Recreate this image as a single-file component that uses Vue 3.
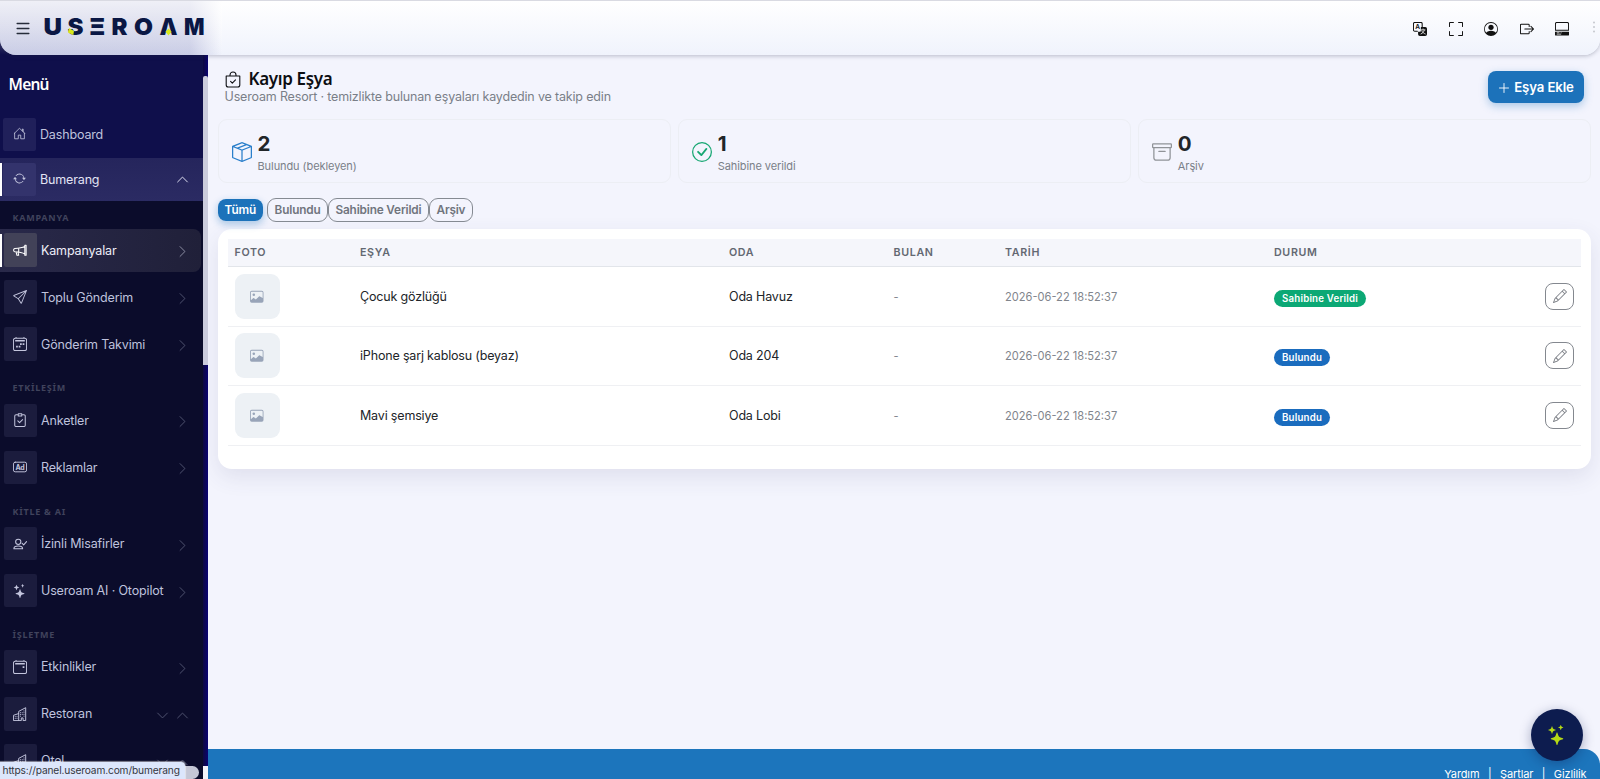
<template>
  <div class="page">
    <header class="topbar">
      <button class="menu-btn"><svg class="icon" viewBox="0 0 16 16" v-html="icons.list"></svg></button>
      <svg class="logo" viewBox="0 0 166 24">
        <text v-for="l in logo" :key="l.x" :x="l.x" y="20" :textLength="l.w" lengthAdjust="spacingAndGlyphs">{{ l.c }}</text>
        <path class="logo-dot" d="M25 13l5 3-.7 4-5.300-2.500zM124.500 13.500l3 3.300-3 3.600-3-3.600z" />
      </svg>
      <nav class="tools">
        <svg v-for="t in tools" :key="t" class="icon" viewBox="0 0 16 16" v-html="icons[t]"></svg>
      </nav>
      <svg class="dots" viewBox="0 0 4 14"><circle v-for="n in 3" :key="n" cx="2" :cy="n * 4.5 - 2" r="1" /></svg>
    </header>

    <aside class="sidebar">
      <div class="side-scroll">
        <h4>Menü</h4>
        <a class="side-item top-item">
          <span class="ibox"><svg class="icon" viewBox="0 0 16 16" v-html="icons.house"></svg></span>
          <span>Dashboard</span>
        </a>
        <a class="side-item top-item open">
          <span class="ibox"><svg class="icon" viewBox="0 0 16 16" v-html="icons.repeat"></svg></span>
          <span>Bumerang</span>
          <svg class="chev" viewBox="0 0 16 16" v-html="icons.up"></svg>
        </a>
        <div class="submenu">
          <section v-for="g in groups" :key="g.label">
            <div class="label">{{ g.label }}</div>
            <a v-for="i in g.items" :key="i.name" class="side-item" :class="{ active: i.active }">
              <span class="ibox"><svg class="icon" viewBox="0 0 16 16" v-html="icons[i.icon]"></svg></span>
              <span>{{ i.name }}</span>
              <span class="chevs">
                <template v-if="i.tree">
                  <svg class="chev" viewBox="0 0 16 16" v-html="icons.down"></svg>
                  <svg class="chev" viewBox="0 0 16 16" v-html="icons.up"></svg>
                </template>
                <svg v-else class="chev" viewBox="0 0 16 16" v-html="icons.right"></svg>
              </span>
            </a>
          </section>
        </div>
      </div>
      <div class="track"><i class="thumb"></i><i class="corner"></i></div>
      <i class="hthumb"></i>
    </aside>

    <div class="content">
      <main>
        <div class="page-head">
          <div>
            <h1><svg class="icon" viewBox="0 0 16 16" v-html="icons.bag"></svg>Kayıp Eşya</h1>
            <p>Useroam Resort · temizlikte bulunan eşyaları kaydedin ve takip edin</p>
          </div>
          <button class="add-btn"><svg class="icon" viewBox="0 0 16 16" v-html="icons.plus"></svg>Eşya Ekle</button>
        </div>

        <div class="stats">
          <div v-for="s in stats" :key="s.label" class="stat" :class="s.tone">
            <svg class="icon" viewBox="0 0 16 16" v-html="icons[s.icon]"></svg>
            <div>
              <strong>{{ s.count }}</strong>
              <small>{{ s.label }}</small>
            </div>
          </div>
        </div>

        <div class="filters">
          <button
            v-for="f in filters"
            :key="f"
            :class="{ on: filter === f }"
            @click="filter = f"
          >{{ f }}</button>
        </div>

        <div class="card">
          <div class="row thead">
            <span>FOTO</span><span>EŞYA</span><span>ODA</span><span>BULAN</span><span>TARİH</span><span>DURUM</span><span></span>
          </div>
          <div v-for="r in visibleRows" :key="r.name" class="row">
            <span><i class="photo"><svg class="icon" viewBox="0 0 16 16" v-html="icons.image"></svg></i></span>
            <span class="txt">{{ r.name }}</span>
            <span class="txt">{{ r.room }}</span>
            <span class="muted">-</span>
            <span class="muted">2026-06-22 18:52:37</span>
            <span><b class="badge" :class="{ given: r.status === 'Sahibine Verildi' }">{{ r.status }}</b></span>
            <span><button class="edit"><svg class="icon" viewBox="0 0 16 16" v-html="icons.pencil"></svg></button></span>
          </div>
        </div>
      </main>
      <footer><a>Yardım</a><i>|</i><a>Şartlar</a><i>|</i><a>Gizlilik</a></footer>
    </div>

    <button class="fab"><svg class="icon" viewBox="0 0 16 16" v-html="icons.stars"></svg></button>
    <div class="status-url">https://panel.useroam.com/bumerang</div>
  </div>
</template>

<script setup>
import { ref, computed } from "vue";

const line = (d, w = 1) =>
  `<path d="${d}" fill="none" stroke="currentColor" stroke-width="${w}" stroke-linecap="round" stroke-linejoin="round"/>`;
const fill = (d) => `<path fill-rule="evenodd" d="${d}"/>`;

const icons = {
  list: line("M.8 1.8h14.4M.8 8h14.4M.8 14.2h14.4", 1.7),
  up: line("M2 11l6-6 6 6", 1.2),
  down: line("M2 5l6 6 6-6", 1.2),
  right: line("M5 2l6 6-6 6", 1.2),
  plus: line("M8 2v12M2 8h12", 1.2),
  house: line("M2 7.5V14.5h4.5v-4.5h3v4.5H14V7.5M1.5 8L8 1.5l6.5 6.5M11.5 4.5v-2h1v3.200"),
  repeat: fill(
    "M11.534 7h3.932a.25.25 0 0 1 .192.41l-1.966 2.36a.25.25 0 0 1-.384 0l-1.966-2.36a.25.25 0 0 1 .192-.41m-11 2h3.932a.25.25 0 0 0 .192-.41L2.692 6.23a.25.25 0 0 0-.384 0L.342 8.59A.25.25 0 0 0 .534 9M8 3c-1.552 0-2.94.707-3.857 1.818a.5.5 0 1 1-.771-.636A6.002 6.002 0 0 1 13.917 7H12.9A5 5 0 0 0 8 3M3.1 9a5.002 5.002 0 0 0 8.757 2.182.5.5 0 1 1 .771.636A6.002 6.002 0 0 1 2.083 9z"
  ),
  megaphone: line("M13.500 2.500h1.500v11.500h-1.500zM13.500 4C10.500 5.500 7 6 2 6.200c-1.800.6-1.800 3.300 0 3.800 5 .2 8.500.7 11.500 2.500M6.500 6v4M3.500 10l1 4h2l-.8-3.800", 1.2),
  send: fill(
    "M15.854.146a.5.5 0 0 1 .11.54l-5.819 14.547a.75.75 0 0 1-1.329.124l-3.178-4.995L.643 7.184a.75.75 0 0 1 .124-1.33L15.314.037a.5.5 0 0 1 .54.11ZM6.636 10.07l2.761 4.338L14.13 2.576zm6.787-8.201L1.591 6.602l4.339 2.76z"
  ),
  calendar:
    line("M2.500 1.500h11a2 2 0 0 1 2 2v10a2 2 0 0 1-2 2h-11a2 2 0 0 1-2-2v-10a2 2 0 0 1 2-2zM3.500 .5v1M12.500 .5v1", 1.15) +
    fill("M2.500 3.500h11v1.500h-11zM11 7h2v2h-2zM8 7h2v2H8zM3.500 10h2v2h-2zM6.500 10h2v2h-2z"),
  event:
    line("M2.500 1.500h11a2 2 0 0 1 2 2v10a2 2 0 0 1-2 2h-11a2 2 0 0 1-2-2v-10a2 2 0 0 1 2-2zM3.500 .5v1M12.500 .5v1", 1.15) +
    fill("M2.500 3.500h11v1.500h-11zM11 7h2v2h-2z"),
  clipboard: line("M5 2H3.500a1.500 1.500 0 0 0-1.500 1.500v10.500a1.500 1.500 0 0 0 1.500 1.500h9a1.500 1.500 0 0 0 1.500-1.500V3.500A1.500 1.500 0 0 0 12.500 2H11M6 .8h4v2.500H6zM5.500 9l2 2L11 7.500", 1.15),
  ad:
    line("M2.500 2.500h11a2 2 0 0 1 2 2v7a2 2 0 0 1-2 2h-11a2 2 0 0 1-2-2v-7a2 2 0 0 1 2-2z", 1.1) +
    `<text x="8" y="10.900" font-size="8" font-weight="700" text-anchor="middle">Ad</text>`,
  person: line("M6 8.500a3 3 0 1 0 0-6 3 3 0 0 0 0 6zM1 13.500c0-2 2-3.200 5-3.200s5 1.200 5 3.200zM10.500 7.300l1.700 1.700 3.300-3.800", 1.2),
  stars: fill(
    "M7.657 6.247c.11-.33.576-.33.686 0l.645 1.937a2.89 2.89 0 0 0 1.829 1.828l1.936.645c.33.11.33.576 0 .686l-1.937.645a2.89 2.89 0 0 0-1.828 1.829l-.645 1.936a.361.361 0 0 1-.686 0l-.645-1.937a2.89 2.89 0 0 0-1.828-1.828l-1.937-.645a.361.361 0 0 1 0-.686l1.937-.645a2.89 2.89 0 0 0 1.828-1.828zM3.794 1.148a.217.217 0 0 1 .412 0l.387 1.162c.173.518.579.924 1.097 1.097l1.162.387a.217.217 0 0 1 0 .412l-1.162.387A1.73 1.73 0 0 0 4.593 5.69l-.387 1.162a.217.217 0 0 1-.412 0L3.407 5.69A1.73 1.73 0 0 0 2.31 4.593l-1.162-.387a.217.217 0 0 1 0-.412l1.162-.387A1.73 1.73 0 0 0 3.407 2.31zM10.863.099a.145.145 0 0 1 .274 0l.258.774c.115.346.386.617.732.732l.774.258a.145.145 0 0 1 0 .274l-.774.258a1.16 1.16 0 0 0-.732.732l-.258.774a.145.145 0 0 1-.274 0l-.258-.774a1.16 1.16 0 0 0-.732-.732L9.1 2.137a.145.145 0 0 1 0-.274l.774-.258c.346-.115.617-.386.732-.732z"
  ),
  buildings:
    line("M6.500 15.500V5L14.500 .8v14.700h-3v-3h-2v3h-9V9.500l6-2", 1.1) +
    line("M2.500 11h.1M4.500 11h.1M2.500 13h.1M4.500 13h.1M8.500 6.500h.1M10.500 6.500h.1M12.500 6.500h.1M8.500 8.500h.1M10.500 8.500h.1M12.500 8.500h.1M8.500 10.500h.1M12.500 10.500h.1M12.500 4.500h.1", 1.1),
  bag: line("M1.200 4.500h13.600v9a2 2 0 0 1-2 2H3.200a2 2 0 0 1-2-2zM5 4.500V3.500a3 3 0 0 1 6 0v1M5.600 9.900l1.700 1.700 3.200-3.200", 1.1),
  box: fill(
    "M8.186 1.113a.5.5 0 0 0-.372 0L1.846 3.5l2.404.961L10.404 2zm3.564 1.426L5.596 5 8 5.961 14.154 3.5zm3.25 1.7-6.5 2.6v7.922l6.5-2.6V4.24zM7.5 14.762V6.838L1 4.239v7.923zM7.443.184a1.5 1.5 0 0 1 1.114 0l7.129 2.852A.5.5 0 0 1 16 3.5v8.662a1 1 0 0 1-.629.928l-7.185 2.874a.5.5 0 0 1-.372 0L.63 13.09a1 1 0 0 1-.63-.928V3.5a.5.5 0 0 1 .314-.464z"
  ),
  check:
    fill("M8 15A7 7 0 1 1 8 1a7 7 0 0 1 0 14m0 1A8 8 0 1 0 8 0a8 8 0 0 0 0 16") +
    fill("m10.97 4.97-.02.022-3.473 4.425-2.093-2.094a.75.75 0 0 0-1.06 1.06L6.97 11.03a.75.75 0 0 0 1.079-.02l3.992-4.99a.75.75 0 0 0-1.071-1.05"),
  archive: fill(
    "M0 2a1 1 0 0 1 1-1h14a1 1 0 0 1 1 1v2a1 1 0 0 1-1 1v7.5a2.5 2.5 0 0 1-2.5 2.5h-9A2.5 2.5 0 0 1 1 12.5V5a1 1 0 0 1-1-1zm2 3v7.5A1.5 1.5 0 0 0 3.5 14h9a1.5 1.5 0 0 0 1.5-1.5V5zm13-3H1v2h14zM5 7.5a.5.5 0 0 1 .5-.5h5a.5.5 0 0 1 0 1h-5a.5.5 0 0 1-.5-.5"
  ),
  image:
    fill("M6.002 5.5a1.5 1.5 0 1 1-3 0 1.5 1.5 0 0 1 3 0") +
    fill("M2.002 1a2 2 0 0 0-2 2v10a2 2 0 0 0 2 2h12a2 2 0 0 0 2-2V3a2 2 0 0 0-2-2zm12 1a1 1 0 0 1 1 1v6.5l-3.777-1.947a.5.5 0 0 0-.577.093l-3.71 3.71-2.66-1.772a.5.5 0 0 0-.63.062L1.002 12V3a1 1 0 0 1 1-1z"),
  pencil: fill(
    "M12.146.146a.5.5 0 0 1 .708 0l3 3a.5.5 0 0 1 0 .708l-10 10a.5.5 0 0 1-.168.11l-5 2a.5.5 0 0 1-.65-.65l2-5a.5.5 0 0 1 .11-.168zM11.207 2.5 13.5 4.793 14.793 3.5 12.5 1.207zm1.586 3L10.5 3.207 4 9.707V10h.5a.5.5 0 0 1 .5.5v.5h.5a.5.5 0 0 1 .5.5v.5h.293zm-9.761 5.175-.106.106-1.528 3.821 3.821-1.528.106-.106A.5.5 0 0 1 5 12.5V12h-.5a.5.5 0 0 1-.5-.5V11h-.5a.5.5 0 0 1-.468-.325"
  ),
  translate:
    line("M5 10.500H2a1.500 1.500 0 0 1-1.500-1.500V2A1.500 1.500 0 0 1 2 .5h7A1.500 1.500 0 0 1 10.500 2v3.500", 1.2) +
    fill("M7 5.800h7a2 2 0 0 1 2 2v6.200a2 2 0 0 1-2 2H7.800a2 2 0 0 1-2-2v-3H8a1 1 0 0 0 1-1V5.800z") +
    `<text x="5.400" y="8.200" font-size="7.500" font-weight="600" text-anchor="middle">A</text>` +
    `<path d="M11.500 7.500v1.300M8.800 9h5.400M13 9c-.6 2.300-2 3.800-4.300 4.800M10 9.800c.8 2 2.300 3.200 4.400 4" fill="none" stroke="#fff" stroke-width=".9"/>`,
  fullscreen: line("M.5 5V1.500a1 1 0 0 1 1-1H5M11 .5h3.500a1 1 0 0 1 1 1V5M15.500 11v3.500a1 1 0 0 1-1 1H11M5 15.500H1.500a1 1 0 0 1-1-1V11", 1.2),
  user:
    fill("M11 6a3 3 0 1 1-6 0 3 3 0 0 1 6 0") +
    fill("M0 8a8 8 0 1 1 16 0A8 8 0 0 1 0 8m8-7a7 7 0 0 0-5.468 11.37C3.242 11.226 4.805 10 8 10s4.757 1.225 5.468 2.37A7 7 0 0 0 8 1"),
  exit: line("M10.500 5V3.500a1 1 0 0 0-1-1h-8a1 1 0 0 0-1 1v9a1 1 0 0 0 1 1h8a1 1 0 0 0 1-1V11M5.500 8h10M12.500 5l3 3-3 3", 1.15),
  desktop:
    line("M.5 9.500V2a1.500 1.500 0 0 1 1.500-1.500h12A1.500 1.500 0 0 1 15.500 2v7.500z", 1.15) +
    fill("M0 11h16v3.500a1 1 0 0 1-1 1H1a1 1 0 0 1-1-1z") +
    `<path d="M2 12.300h3M6.500 12.300h1M2 13.900h5" stroke="#fff" stroke-width=".8"/>`,
};

// wordmark letters, each one fitted to its own slot
const logo = [
  { c: "U", x: -0.5, w: 18.5 },
  { c: "S", x: 23.5, w: 16 },
  { c: "Ξ", x: 45.5, w: 15.5 },
  { c: "R", x: 67.5, w: 16 },
  { c: "O", x: 90, w: 19 },
  { c: "Λ", x: 115.5, w: 18 },
  { c: "M", x: 140, w: 20.5 },
];

const tools = ["translate", "fullscreen", "user", "exit", "desktop"];

const groups = [
  {
    label: "KAMPANYA",
    items: [
      { name: "Kampanyalar", icon: "megaphone", active: true },
      { name: "Toplu Gönderim", icon: "send" },
      { name: "Gönderim Takvimi", icon: "calendar" },
    ],
  },
  {
    label: "ETKİLEŞİM",
    items: [
      { name: "Anketler", icon: "clipboard" },
      { name: "Reklamlar", icon: "ad" },
    ],
  },
  {
    label: "KİTLE & AI",
    items: [
      { name: "İzinli Misafirler", icon: "person" },
      { name: "Useroam AI · Otopilot", icon: "stars" },
    ],
  },
  {
    label: "İŞLETME",
    items: [
      { name: "Etkinlikler", icon: "event" },
      { name: "Restoran", icon: "buildings", tree: true },
      { name: "Otel", icon: "buildings", tree: true },
    ],
  },
];

const stats = [
  { count: 2, label: "Bulundu (bekleyen)", icon: "box", tone: "blue" },
  { count: 1, label: "Sahibine verildi", icon: "check", tone: "green" },
  { count: 0, label: "Arşiv", icon: "archive", tone: "gray" },
];

const filters = ["Tümü", "Bulundu", "Sahibine Verildi", "Arşiv"];
const filter = ref("Tümü");

const rows = [
  { name: "Çocuk gözlüğü", room: "Oda Havuz", status: "Sahibine Verildi" },
  { name: "iPhone şarj kablosu (beyaz)", room: "Oda 204", status: "Bulundu" },
  { name: "Mavi şemsiye", room: "Oda Lobi", status: "Bulundu" },
];
const visibleRows = computed(() =>
  filter.value === "Tümü" ? rows : rows.filter((r) => r.status === filter.value)
);
</script>

<style>
body {
  margin: 0;
  overflow: hidden;
}
</style>

<style scoped>
* {
  box-sizing: border-box;
}

.page {
  position: relative;
  display: flex;
  width: 1600px;
  height: 779px;
  overflow: hidden;
  background: #f3f4fd;
  font-family: Inter, "Noto Sans", sans-serif;
  font-size: 12.5px;
  color: #212529;
}

button {
  font-family: inherit;
  padding: 0;
}

.icon,
.chev {
  display: block;
  flex: none;
  width: 14px;
  height: 14px;
  fill: currentColor;
}

/* header floats over sidebar and content */
.topbar {
  position: absolute;
  inset: 0 0 auto 0;
  z-index: 5;
  height: 55px;
  display: flex;
  align-items: center;
  padding-left: 16px;
  border-top: 1px solid #d9dae2;
  border-radius: 0 0 16px 16px;
  background:
    linear-gradient(90deg, rgba(158, 162, 205, 0.48) 0, rgba(158, 162, 205, 0.48) 190px, rgba(158, 162, 205, 0) 222px),
    linear-gradient(#fff, #f0f3fc);
  box-shadow: 0 1px 4px rgba(30, 35, 60, 0.28);
}

.topbar::before {
  content: "";
  position: absolute;
  inset: 0 auto 0 0;
  width: 222px;
  background: linear-gradient(rgba(255, 255, 255, 0.65), rgba(255, 255, 255, 0));
}

.menu-btn {
  position: relative;
  border: 0;
  background: none;
  color: #262c3a;
}

.menu-btn .icon {
  height: 13px;
}

.logo {
  position: relative;
  width: 166px;
  height: 24px;
  margin: -2px 0 0 14px;
  overflow: visible;
  fill: #0a1744;
  font-size: 23.5px;
  font-weight: 900;
}

.logo-dot {
  fill: #d8e81c;
}

.tools {
  display: flex;
  gap: 21.4px;
  margin-left: auto;
  padding-top: 1px;
  color: #111;
}

.dots {
  width: 4px;
  height: 14px;
  margin: -3px 4px 0 23px;
  fill: #c5c7ce;
}

.sidebar {
  position: relative;
  flex: none;
  display: flex;
  width: 208px;
  height: 779px;
  padding-top: 55px;
  overflow: hidden;
  background: #0f0f4b;
}

.side-scroll {
  width: 203px;
  flex: none;
}

.sidebar h4 {
  margin: 0 0 0 8.5px;
  padding-top: 18px;
  height: 58px;
  font: 600 15.5px/22px "Noto Sans", sans-serif;
  letter-spacing: -0.75px;
  color: #fff;
}

.side-item {
  position: relative;
  display: flex;
  align-items: center;
  gap: 4px;
  height: 42.9px;
  margin-bottom: 4px;
  padding: 0 14px 0 3.5px;
  color: #bfc2dd;
  letter-spacing: -0.15px;
}

.top-item {
  padding-left: 2.5px;
  margin-bottom: 2px;
  height: 43px;
}

.top-item > span:nth-child(2) {
  margin-top: -1px;
}

.top-item .ibox .icon {
  width: 13px;
  height: 13px;
  margin-top: -2px;
}

.top-item .ibox {
  background: #20205a;
}

.side-item.open {
  margin-bottom: 0;
  background: linear-gradient(#25255c, #2b2b63);
  color: #e2e3f4;
}

.open .ibox {
  background: #33336c;
}

.open .chev {
  margin-left: auto;
}

.open::before,
.active::before {
  content: "";
  position: absolute;
  left: 0;
  top: 5px;
  width: 2px;
  height: 33px;
  background: #fff;
}

.ibox {
  flex: none;
  display: grid;
  place-items: center;
  width: 33.5px;
  height: 33.5px;
  border-radius: 2px;
  background: #1b1c3d;
  color: #c3c5dd;
}

.chev {
  width: 13px;
  height: 13px;
}

.chevs {
  display: flex;
  gap: 7px;
  margin: 3px 0 0 auto;
  color: #505370;
}

.submenu {
  height: 581px;
  background: #0b0c2b;
}

.label {
  height: 29.5px;
  padding: 12px 0 0 12.5px;
  font: 700 9px/13px "Noto Sans", sans-serif;
  letter-spacing: 0.75px;
  color: #40435c;
}

section:first-child .label {
  height: 27.8px;
  padding-top: 10px;
}

.side-item.active {
  width: 201px;
  padding-right: 12px;
  border-radius: 0 8px 8px 0;
  background: linear-gradient(90deg, #29294a, #202039);
  color: #eeeef8;
}

.active .ibox {
  background: #424258;
  color: #fff;
}

.active .chevs {
  color: #8d8fa5;
}

.track {
  position: relative;
  width: 5px;
  background: linear-gradient(90deg, #0d0940, #0a0370);
}

.thumb {
  position: absolute;
  top: 21px;
  width: 5px;
  height: 289px;
  border-radius: 2px 2px 0 0;
  background: #cbccdc;
}

.corner {
  position: absolute;
  bottom: 0;
  width: 5px;
  height: 13px;
  background: #f4f4fa;
}

.hthumb {
  position: absolute;
  left: 0;
  bottom: 0;
  width: 199px;
  height: 13px;
  border-radius: 7px;
  background: #c5c7d6;
}

.content {
  flex: 1;
  display: flex;
  flex-direction: column;
  padding-top: 55px;
}

main {
  flex: 1;
  padding: 15px 9px 0 9.5px;
}

.page-head {
  display: flex;
  justify-content: space-between;
  padding: 0 7px;
  height: 49px;
}

h1 {
  display: flex;
  align-items: center;
  gap: 8px;
  margin: 0;
  font: 600 17px/18px "Noto Sans", sans-serif;
  letter-spacing: -0.35px;
  color: #0d0e12;
}

h1 .icon {
  width: 16px;
  height: 17px;
}

.page-head p {
  margin: 1px 0 0;
  line-height: 16px;
  letter-spacing: -0.17px;
  color: #7a7f88;
}

.add-btn {
  display: flex;
  align-items: center;
  justify-content: center;
  gap: 4px;
  width: 96px;
  height: 32px;
  margin-top: 1px;
  border: 0;
  border-radius: 8px;
  background: #1c72ba;
  box-shadow: 0 3px 8px rgba(28, 114, 186, 0.35);
  font-size: 13.2px;
  font-weight: 600;
  letter-spacing: -0.1px;
  color: #fff;
}

.add-btn .icon {
  width: 12px;
  height: 12px;
  margin-top: 2px;
}

.stats {
  display: grid;
  grid-template-columns: repeat(3, 1fr);
  gap: 7px;
}

.stat {
  display: flex;
  align-items: center;
  gap: 6px;
  height: 64px;
  padding: 0 13px;
  border: 1px solid #eceef4;
  border-radius: 9px;
}

.stat .icon {
  width: 20px;
  height: 20px;
  margin-top: 1px;
}

.blue .icon {
  color: #2a7fcb;
}

.green .icon {
  color: #16a772;
}

.gray .icon {
  color: #909398;
}

.stat strong {
  display: block;
  padding-top: 3px;
  font-size: 20.5px;
  line-height: 26px;
}

.stat small {
  display: block;
  font-size: 11px;
  line-height: 18px;
  letter-spacing: -0.08px;
  color: #7a7f88;
}

.filters {
  display: flex;
  margin: 14.5px 0 6.5px;
}

.filters button {
  height: 24.5px;
  padding: 0 6.5px;
  border: 1px solid #858a92;
  border-radius: 9px;
  background: none;
  font-size: 11.8px;
  font-weight: 600;
  letter-spacing: -0.17px;
  color: #70757d;
}

.filters button:first-child {
  margin: 0 3.5px 0 -0.5px;
}

.filters .on {
  border-color: transparent;
  background: #1c72ba;
  background-clip: padding-box;
  box-shadow: 0 3px 7px rgba(28, 114, 186, 0.3);
  color: #fff;
}

.card {
  height: 240px;
  padding: 10px 10.5px;
  border-radius: 14px;
  background: #fff;
  box-shadow: 0 8px 22px rgba(60, 60, 110, 0.11);
}

.row {
  display: grid;
  grid-template-columns: 125.5px 369px 164.5px 111.5px 269px 1fr 43px;
  align-items: center;
  height: 59.5px;
  padding-left: 6.5px;
  border-bottom: 1px solid #eff0f3;
  line-height: 18px;
}

.txt {
  padding-top: 1px;
  letter-spacing: -0.17px;
}

.thead {
  height: 28.5px;
  padding-top: 1px;
  border-color: #e2e5ea;
  background: #f5f6fb;
  font-size: 10.7px;
  font-weight: 600;
  letter-spacing: 0.65px;
  color: #636872;
}

.photo {
  display: grid;
  place-items: center;
  width: 45px;
  height: 45px;
  border-radius: 9px;
  background: #edf1f5;
  color: #98a4b8;
}

.photo .icon {
  width: 13.5px;
  height: 13.5px;
}

.muted {
  padding-top: 1px;
  font-size: 11.1px;
  letter-spacing: 0;
  color: #81858c;
}

.badge {
  display: block;
  width: max-content;
  height: 17px;
  margin-top: 4px;
  padding: 0 8px;
  border-radius: 9px;
  background: #1a6cbe;
  font-size: 9.7px;
  font-weight: 600;
  letter-spacing: 0.2px;
  line-height: 17px;
  color: #fff;
}

.badge.given {
  background: #0ca875;
}

.edit {
  display: grid;
  place-items: center;
  width: 29px;
  height: 27px;
  margin-left: 7.5px;
  border: 1px solid #84888f;
  border-radius: 8px;
  background: none;
  color: #777b82;
}

footer {
  display: flex;
  justify-content: flex-end;
  gap: 8.5px;
  height: 30px;
  padding: 17px 13.5px 0 0;
  overflow: hidden;
  border-top-right-radius: 16px;
  background: #1c75bc;
  font-size: 11px;
  letter-spacing: -0.12px;
  line-height: 17px;
  color: #fff;
}

footer i {
  font-style: normal;
}

.fab {
  position: absolute;
  right: 17.5px;
  bottom: 18.5px;
  z-index: 6;
  display: grid;
  place-items: center;
  width: 52px;
  height: 52px;
  border: 0;
  border-radius: 50%;
  background: #0d1c4f;
  box-shadow: 0 3px 12px rgba(13, 28, 79, 0.35);
  color: #b5d916;
}

.fab .icon {
  width: 20px;
  height: 20px;
}

/* link preview in the bottom-left corner */
.status-url {
  position: absolute;
  left: 0;
  bottom: 0;
  z-index: 7;
  width: 185px;
  height: 17px;
  padding-left: 2.5px;
  border-top-right-radius: 4px;
  background: #dce6fc;
  box-shadow: 0 0 1px 1px rgba(255, 255, 255, 0.5);
  font: 10.2px/17px Inter, sans-serif;
  letter-spacing: -0.14px;
  color: #34373e;
}
</style>
